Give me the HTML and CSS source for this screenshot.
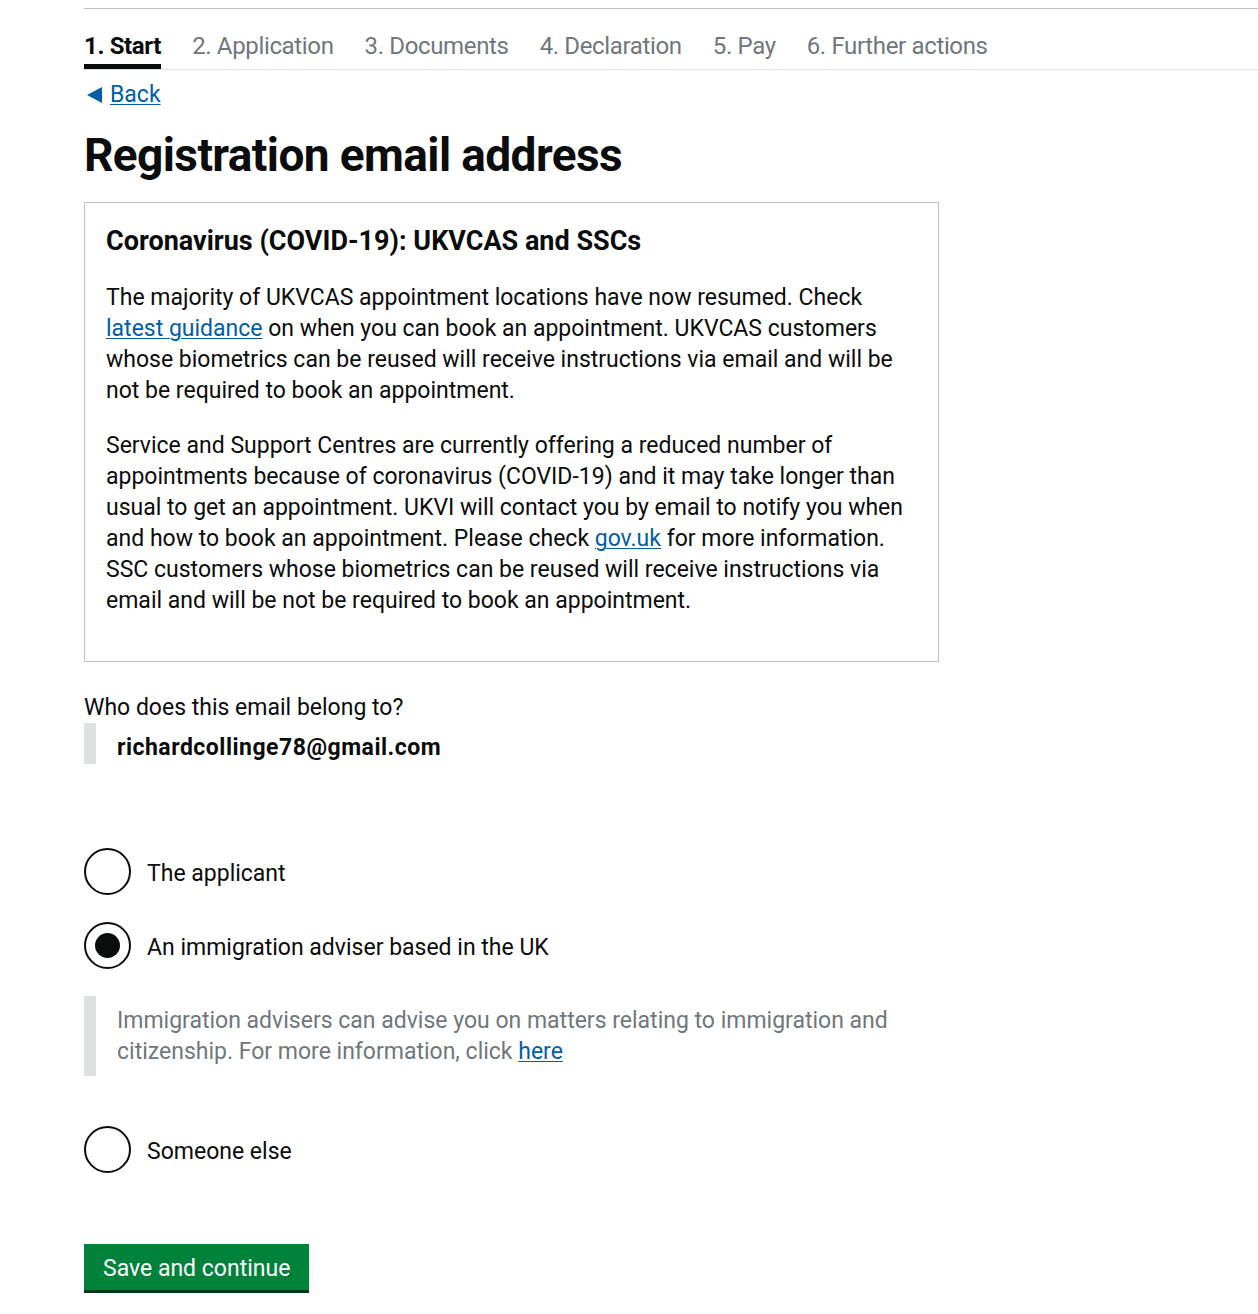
FILE: index.html
```html
<!DOCTYPE html>
<html lang="en">
<head>
    <meta charset="utf-8">
    <title>Registration email address</title>
    <meta name="viewport" content="width=device-width, initial-scale=1.0">
    <link rel="stylesheet" href="styles.css">
</head>
<body>

    <div class="page">

        <!-- Progress tabs -->
        <nav class="steps">
            <span class="step step-active">1. Start</span>
            <span class="step">2. Application</span>
            <span class="step">3. Documents</span>
            <span class="step">4. Declaration</span>
            <span class="step">5. Pay</span>
            <span class="step">6. Further actions</span>
        </nav>

        <main class="content">
            <a class="back-link" href="#">Back</a>

            <h1 class="page-title">Registration email address</h1>

            <section class="notice">
                <h2 class="notice-title">Coronavirus (COVID-19): UKVCAS and SSCs</h2>
                <p>The majority of UKVCAS appointment locations have now resumed. Check <a href="#">latest guidance</a> on when you can book an appointment. UKVCAS customers whose biometrics can be reused will receive instructions via email and will be not be required to book an appointment.</p>
                <p>Service and Support Centres are currently offering a reduced number of appointments because of coronavirus (COVID-19) and it may take longer than usual to get an appointment. UKVI will contact you by email to notify you when and how to book an appointment. Please check <a href="#">gov.uk</a> for more information. SSC customers whose biometrics can be reused will receive instructions via email and will be not be required to book an appointment.</p>
            </section>

            <form class="email-form">
                <p class="question">Who does this email belong to?</p>
                <div class="email-inset">richardcollinge78@gmail.com</div>

                <div class="radios">
                    <label class="radio">
                        <input type="radio" name="owner" value="applicant">
                        <span class="radio-mark"></span>
                        <span class="radio-label">The applicant</span>
                    </label>

                    <label class="radio">
                        <input type="radio" name="owner" value="adviser" checked>
                        <span class="radio-mark"></span>
                        <span class="radio-label">An immigration adviser based in the UK</span>
                    </label>

                    <div class="hint-inset">
                        Immigration advisers can advise you on matters relating to immigration and citizenship. For more information, click <a href="#">here</a>
                    </div>

                    <label class="radio radio-last">
                        <input type="radio" name="owner" value="other">
                        <span class="radio-mark"></span>
                        <span class="radio-label">Someone else</span>
                    </label>
                </div>

                <button type="button" class="save-button">Save and continue</button>
            </form>
        </main>

    </div>

</body>
</html>
```

FILE: styles.css
```css
body {
    margin: 0;
    background: #fff;
    color: #0b0c0c;
    font-family: Roboto, 'Liberation Sans', sans-serif;
    font-size: 23px;
    line-height: 31px;
}

a {
    color: #005ea5;
    text-decoration: underline;
    text-underline-offset: 2px;
    text-decoration-thickness: 1px;
}

.page {
    padding: 8px 0 40px 84px;
}

/* Progress tabs */
.steps {
    display: flex;
    gap: 31px;
    border-top: 1px solid #bfc1c3;
    border-bottom: 1px solid #dee0e2;
}

.step {
    padding-top: 24px;
    padding-bottom: 5px;
    font-size: 24px;
    line-height: 26px;
    letter-spacing: -0.35px;
    color: #6f777b;
    border-bottom: 5px solid transparent;
}

.step-active {
    color: #0b0c0c;
    font-weight: bold;
    border-bottom-color: #0b0c0c;
}

.content {
    width: 855px;
}

.back-link {
    display: inline-flex;
    align-items: center;
    gap: 8px;
    margin-top: 12px;
    line-height: 26px;
    padding-left: 3px;
}

.back-link::before {
    content: "";
    border-style: solid;
    border-width: 8px 15px 8px 0;
    border-color: transparent #005ea5 transparent transparent;
}

.page-title {
    margin: 19px 0 22px;
    font-size: 46px;
    line-height: 50px;
    letter-spacing: -0.6px;
}

.notice {
    border: 1px solid #bfc1c3;
    padding: 22px 21px 21px;
}

.notice-title {
    margin: 0 0 25px;
    font-size: 27px;
    line-height: 32px;
}

.notice p {
    margin: 0 0 24px;
}

.question {
    margin: 30px 0 0;
}

.email-inset {
    border-left: 12px solid #dee0e2;
    padding: 9px 0 1px 21px;
    font-weight: bold;
    letter-spacing: 0.5px;
}

.radios {
    margin-top: 84px;
}

.radio {
    display: flex;
    align-items: center;
    gap: 16px;
    margin-bottom: 27px;
    cursor: pointer;
}

.radio input {
    display: none;
}

.radio-mark {
    width: 43px;
    height: 43px;
    border: 2px solid #0b0c0c;
    border-radius: 50%;
    display: flex;
    align-items: center;
    justify-content: center;
    flex-shrink: 0;
}

.radio input:checked + .radio-mark::after {
    content: "";
    width: 25px;
    height: 25px;
    border-radius: 50%;
    background: #0b0c0c;
}

.radio-label {
    padding-top: 3px;
}

.hint-inset {
    border-left: 12px solid #dee0e2;
    padding: 9px 0 9px 21px;
    margin: 0 0 50px;
    color: #6f777b;
}

.radio-last {
    margin-bottom: 71px;
}

.save-button {
    background: #00823b;
    color: #fff;
    border: none;
    box-shadow: 0 3px 0 #003618;
    font-family: inherit;
    font-size: 23px;
    line-height: 31px;
    padding: 9px 19px 6px;
    cursor: pointer;
}
```
